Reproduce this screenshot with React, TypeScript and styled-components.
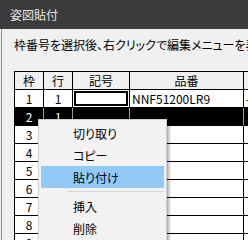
import React from 'react';
import styled, {createGlobalStyle} from 'styled-components';

const GlobalStyle = createGlobalStyle`
  html, body {
    margin: 0;
    padding: 0;
    background: #f0f0f0;
  }
  body {
    font-family: "Noto Sans CJK JP", "Noto Sans", sans-serif;
    color: #000;
  }
`

const Window = styled.div`
  position: relative;
  width: 248px;
  height: 240px;
  overflow: hidden;
  background: #f0f0f0;
`
const TitleBar = styled.div`
  display: flex;
  align-items: center;
  height: 29px;
  padding-left: 10px;
  background: #3b3b3b;
  color: #e4e4e4;
  font-size: 12px;
  font-feature-settings: "palt";
`
const Body = styled.div`
  height: 211px;
  margin-left: 1px;
  padding: 9px 0 0 12px;
  border-left: 1px solid #8c8c8c;
`
const Hint = styled.div`
  height: 14px;
  margin-bottom: 19px;
  font-size: 12px;
  line-height: 14px;
  white-space: nowrap;
  font-feature-settings: "palt";
`
const Grid = styled.div`
  display: grid;
  grid-template-columns: 29px 29px 57px 114px 60px;
  grid-auto-rows: 18px;
  width: max-content;
  border-top: 1px solid #000;
  border-left: 1px solid #000;
`
const Cell = styled.div<{$head?: boolean; $sel?: boolean; $align?: string; $edit?: boolean}>`
  display: flex;
  align-items: center;
  justify-content: ${p => p.$align || 'center'};
  padding: ${p => p.$align === 'flex-start' ? '0 0 0 2px' : '0'};
  border-right: 1px solid ${p => p.$sel ? '#9a9a9a' : '#000'};
  border-bottom: 1px solid #000;
  background: ${p => p.$sel ? '#000' : p.$head ? '#f0f0f0' : '#fff'};
  color: ${p => p.$sel ? '#fff' : '#000'};
  font-size: 12px;
  white-space: nowrap;
  overflow: hidden;
  box-shadow: ${p => p.$edit ? 'inset 0 0 0 1px #fff, inset 0 0 0 3px #000' : 'none'};
`
const Menu = styled.div`
  position: absolute;
  left: 38px;
  top: 119px;
  width: 123px;
  padding: 2px;
  background: #f2f2f2;
  border: 1px solid #cfcfcf;
  box-shadow: 2px 2px 3px rgba(0, 0, 0, 0.35);
`
const MenuItem = styled.div<{$active?: boolean}>`
  height: 22px;
  padding-left: 32px;
  display: flex;
  align-items: center;
  font-size: 12px;
  font-feature-settings: "palt";
  background: ${p => p.$active ? '#91c9f7' : 'transparent'};
`
const Separator = styled.div`
  height: 1px;
  margin: 3px 0 3px 27px;
  background: #d7d7d7;
`

const rows = [
  {no: '1', line: '1', mark: '', part: 'NNF51200LR9', extra: '-', edit: true},
  {no: '2', line: '1', mark: '', part: '', extra: '', sel: true},
  {no: '3', line: '', mark: '', part: '', extra: ''},
  {no: '4', line: '', mark: '', part: '', extra: ''},
  {no: '5', line: '', mark: '', part: '', extra: ''},
  {no: '6', line: '', mark: '', part: '', extra: ''},
  {no: '7', line: '', mark: '', part: '', extra: ''},
  {no: '8', line: '', mark: '', part: '', extra: ''},
  {no: '9', line: '', mark: '', part: '', extra: ''},
]

const App: React.FC = () => {
  return (
    <Window>
      <GlobalStyle/>
      <TitleBar>姿図貼付</TitleBar>
      <Body>
        <Hint>枠番号を選択後、右クリックで編集メニューを表示します</Hint>
        <Grid>
          <Cell $head>枠</Cell>
          <Cell $head>行</Cell>
          <Cell $head>記号</Cell>
          <Cell $head>品番</Cell>
          <Cell $head></Cell>
          {rows.map(r => (
            <React.Fragment key={r.no}>
              <Cell $sel={r.sel}>{r.no}</Cell>
              <Cell $sel={r.sel}>{r.line}</Cell>
              <Cell $sel={r.sel} $edit={r.edit}>{r.mark}</Cell>
              <Cell $sel={r.sel} $align="flex-start">{r.part}</Cell>
              <Cell $sel={r.sel} $align="flex-start">{r.extra}</Cell>
            </React.Fragment>
          ))}
        </Grid>
      </Body>
      <Menu>
        <MenuItem>切り取り</MenuItem>
        <MenuItem>コピー</MenuItem>
        <MenuItem $active>貼り付け</MenuItem>
        <Separator/>
        <MenuItem>挿入</MenuItem>
        <MenuItem>削除</MenuItem>
      </Menu>
    </Window>
  );
};

export default App;
